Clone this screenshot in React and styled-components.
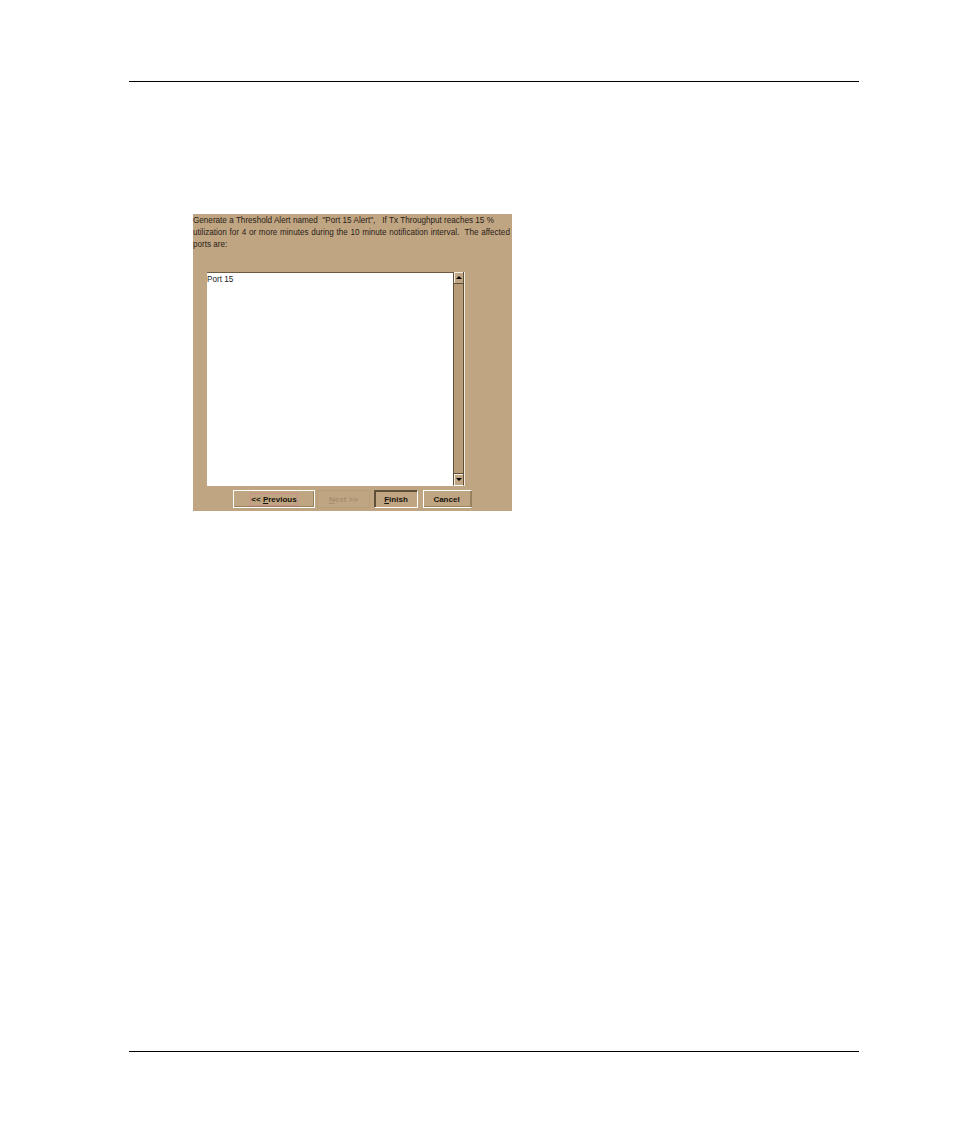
import React from 'react'
import styled, { createGlobalStyle } from 'styled-components'

const GlobalStyle = createGlobalStyle`
  html, body {
    margin: 0;
    background: #fff;
  }
`

const Page = styled.main`
  width: 954px;
  height: 1145px;
  box-sizing: border-box;
  padding: 81px 95px 0 129px;
  display: flex;
  flex-direction: column;
  font-family: "Liberation Sans", Arial, sans-serif;
`

const Rule = styled.hr`
  margin: 0;
  border: 0;
  height: 1px;
  background: #000;
  flex: none;
`

const Body = styled.section`
  flex: none;
  height: 969px;
  padding: 132px 0 0 64px;
  box-sizing: border-box;
`

const Panel = styled.div`
  width: 319px;
  height: 297px;
  box-sizing: border-box;
  background: #c0a582;
  padding-top: 1px;
  overflow: hidden;
`

const Message = styled.div`
  height: 57px;
  width: 319px;
  font-size: 8.15px;
  line-height: 12px;
  color: #2a2218;
`

const MessageLine = styled.p`
  margin: 0;
  white-space: pre;
  word-spacing: ${p => p.$spacing || 0}px;
`

const ListRow = styled.div`
  display: flex;
  margin-left: 14px;
  width: 257px;
  height: 214px;
`

const List = styled.div`
  width: 246px;
  box-sizing: border-box;
  background: #fff;
  border-top: 1px solid #6b5a41;
  padding: 1px 0 0 0;
  font-size: 8.15px;
  line-height: 11px;
  color: #1a1a1a;
`

const Scrollbar = styled.div`
  width: 11px;
  display: flex;
  flex-direction: column;
  box-sizing: border-box;
  background: #c0a582;
  border-left: 1px solid #5f4f39;
  border-right: 1px solid #5f4f39;
  border-bottom: 1px solid #fff;
  box-shadow: 1px 0 0 #f3ede3;
`

const Track = styled.div`
  flex: 1;
  background: #b89c78;
  border-top: 1px solid #5f4f39;
  border-bottom: 1px solid #5f4f39;
`

const Arrow = styled.div`
  height: 11px;
  flex: none;
  display: flex;
  align-items: center;
  justify-content: center;
  background: #c0a582;
  box-shadow: inset 1px 1px 0 #f3ede3;
`

const Buttons = styled.div`
  display: flex;
  margin: 4px 0 0 40px;
`

const Button = styled.div`
  width: ${p => p.$width}px;
  height: 18px;
  margin-right: ${p => p.$gap}px;
  flex: none;
  box-sizing: border-box;
  display: flex;
  align-items: center;
  justify-content: center;
  font-size: 8px;
  font-weight: bold;
  color: ${p => (p.$disabled ? '#a58d6c' : '#15110b')};
  border: 1px solid ${p => (p.$disabled ? '#b89d79' : '#fff')};
  box-shadow: ${p => (p.$disabled ? 'none' : 'inset -1px -1px 0 #97815f')};
  ${p =>
    p.$pressed &&
    `
    border-color: #5f4f39 #fff #fff #5f4f39;
    box-shadow: inset 1px 1px 0 #5f4f39;
  `}
  ${p => p.$clipped && 'border-right-color: #97815f; padding-right: 2px;'}
`

const Focus = styled.span`
  display: inline-block;
  height: 13px;
  line-height: 13px;
  box-sizing: border-box;
  outline: 1px solid #c98f8c;
  outline-offset: -1px;
  padding: 0 1px;
`

const Key = styled.span`
  text-decoration: underline;
`

const App = () => (
  <Page>
    <GlobalStyle />
    <Rule />
    <Body>
      <Panel>
        <Message>
          <MessageLine $spacing={0.07}>{'Generate a Threshold Alert named  "Port 15 Alert",   If Tx Throughput reaches 15 %'}</MessageLine>
          <MessageLine $spacing={0.43}>{'utilization for 4 or more minutes during the 10 minute notification interval.  The affected'}</MessageLine>
          <MessageLine>ports are:</MessageLine>
        </Message>
        <ListRow>
          <List>Port 15</List>
          <Scrollbar>
            <Arrow>
              <svg width="6" height="3" viewBox="0 0 6 3"><path d="M3 0L6 3H0z" fill="#000" /></svg>
            </Arrow>
            <Track />
            <Arrow>
              <svg width="6" height="3" viewBox="0 0 6 3"><path d="M0 0h6L3 3z" fill="#000" /></svg>
            </Arrow>
          </Scrollbar>
        </ListRow>
        <Buttons>
          <Button $width={82} $gap={2}>
            <Focus>&lt;&lt; <Key>P</Key>revious</Focus>
          </Button>
          <Button $width={53} $gap={4} $disabled>
            <span><Key>N</Key>ext &gt;&gt;</span>
          </Button>
          <Button $width={44} $gap={5} $pressed>
            <span><Key>F</Key>inish</span>
          </Button>
          <Button $width={49} $gap={0} $clipped>Cancel</Button>
        </Buttons>
      </Panel>
    </Body>
    <Rule />
  </Page>
)

export default App
